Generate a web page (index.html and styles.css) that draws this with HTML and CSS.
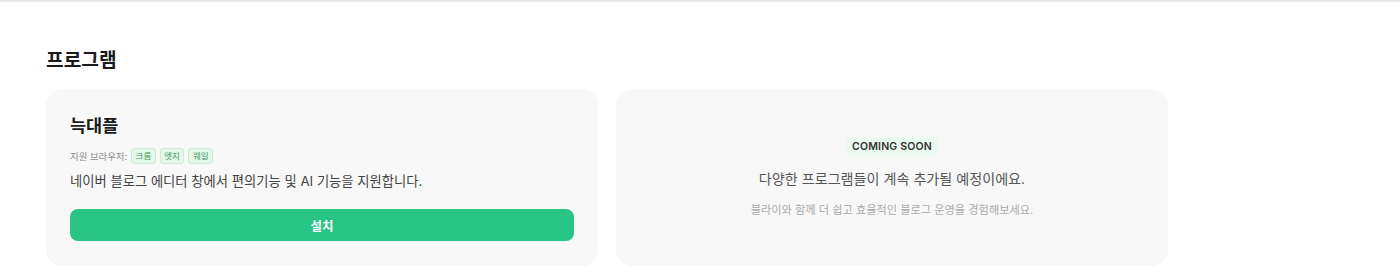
FILE: index.html
```html
<!DOCTYPE html>
<html lang="ko">
<head>
<meta charset="utf-8">
<link rel="stylesheet" href="styles.css">
</head>
<body>
<div class="topline"></div>
<section class="programs">
  <h2 class="section-title">프로그램</h2>
  <div class="cards">
    <div class="card">
      <h3 class="card-title">늑대플</h3>
      <div class="browsers">
        <span class="browsers-label">지원 브라우저:</span>
        <span class="tag">크롬</span>
        <span class="tag">엣지</span>
        <span class="tag">웨일</span>
      </div>
      <p class="desc">네이버 블로그 에디터 창에서 편의기능 및 AI 기능을 지원합니다.</p>
      <button class="install">설치</button>
    </div>
    <div class="card soon">
      <span class="badge">COMING SOON</span>
      <p class="soon-main">다양한 프로그램들이 계속 추가될 예정이에요.</p>
      <p class="soon-sub">블라이와 함께 더 쉽고 효율적인 블로그 운영을 경험해보세요.</p>
    </div>
  </div>
</section>
</body>
</html>
```

FILE: styles.css
```css
* { box-sizing: border-box; }
html, body { margin: 0; padding: 0; background: #fff; }
body {
  font-family: Inter, "Noto Sans CJK KR", sans-serif;
  color: #222;
}
.topline { height: 2px; background: #e8e8e8; }
.programs { padding: 44px 46px 0; }
.section-title {
  margin: 0 0 15px;
  font-size: 19.2px;
  line-height: 28px;
  font-weight: 700;
  color: #1a1a1a;
}
.cards { display: flex; gap: 18px; }
.card {
  width: 552px;
  height: 177px;
  background: #f8f8f8;
  border-radius: 16px;
  padding: 24px 24px 25px;
  display: flex;
  flex-direction: column;
}
.card-title {
  margin: 0;
  font-size: 17.5px;
  line-height: 26px;
  font-weight: 600;
  color: #1a1a1a;
}
.browsers {
  margin-top: 9px;
  display: flex;
  align-items: center;
  gap: 4px;
  height: 16px;
}
.browsers-label { font-size: 9.4px; color: #8a8a8a; }
.tag {
  font-size: 8.5px;
  line-height: 14px;
  padding: 0 3.5px;
  background: #e5f6ea;
  border: 1px solid #cdebd6;
  border-radius: 3px;
  color: #3a9e5a;
}
.desc {
  margin: 6px 0 0;
  font-size: 13.3px;
  line-height: 22px;
  color: #444;
}
.install {
  margin-top: auto;
  height: 32px;
  width: 100%;
  border: none;
  border-radius: 8px;
  background: #27c485;
  color: #fff;
  font-family: inherit;
  font-size: 12.5px;
  font-weight: 700;
}
.soon {
  align-items: center;
  justify-content: center;
  padding-top: 26px;
}
.badge {
  font-size: 10.5px;
  font-weight: 600;
  letter-spacing: 0.2px;
  color: #333;
  background: #ebf9f0;
  padding: 2px 6px;
  line-height: 15px;
  border-radius: 4px;
}
.soon-main {
  margin: 12px 0 0;
  font-size: 14.1px;
  line-height: 22px;
  color: #555;
}
.soon-sub {
  margin: 11px 0 0;
  font-size: 11.2px;
  line-height: 18px;
  color: #aaa;
}
```
